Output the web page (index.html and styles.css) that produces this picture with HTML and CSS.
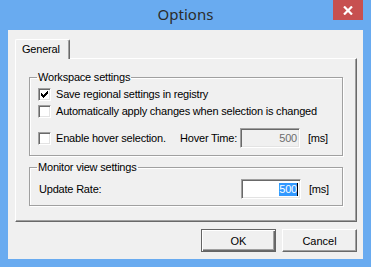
FILE: index.html
```html
<!DOCTYPE html>
<html lang="en">
<head>
  <meta charset="UTF-8">
  <title>Options</title>
  <link rel="stylesheet" href="styles.css">
</head>
<body>

  <div class="window">
    <!-- Barre de titre -->
    <div class="titlebar">
      <span class="title">Options</span>
      <button class="close-button" aria-label="Close">
        <svg width="10" height="9" viewBox="0 0 10 9">
          <path d="M1 0.5 L9 8.5 M9 0.5 L1 8.5" stroke="#ffffff" stroke-width="2.2" fill="none"/>
        </svg>
      </button>
    </div>

    <div class="client">
      <!-- Onglets -->
      <div class="tabs">
        <div class="tab">General</div>
      </div>

      <div class="panel">
        <fieldset class="group">
          <legend>Workspace settings</legend>
          <label class="check-row">
            <span class="check">
              <svg width="7" height="7" viewBox="0 0 7 7" shape-rendering="crispEdges">
                <path d="M0 2h1v3h-1z M1 3h1v3h-1z M2 4h1v3h-1z M3 3h1v3h-1z M4 2h1v3h-1z M5 1h1v3h-1z M6 0h1v3h-1z" fill="#000"/>
              </svg>
            </span>
            Save regional settings in registry
          </label>
          <label class="check-row">
            <span class="check"></span>
            Automatically apply changes when selection is changed
          </label>
          <div class="hover-row">
            <label class="check-row hover-check">
              <span class="check"></span>
              Enable hover selection.
            </label>
            <span class="field-label">Hover Time:</span>
            <span class="field disabled">500</span>
            <span class="unit">[ms]</span>
          </div>
        </fieldset>

        <fieldset class="group second">
          <legend>Monitor view settings</legend>
          <div class="field-row">
            <span class="row-label">Update Rate:</span>
            <span class="field"><span class="selected">500</span><span class="caret"></span></span>
            <span class="unit">[ms]</span>
          </div>
        </fieldset>
      </div>

      <!-- Boutons -->
      <div class="buttons">
        <button class="btn default">OK</button>
        <button class="btn">Cancel</button>
      </div>
    </div>
  </div>

</body>
</html>
```

FILE: styles.css
```css
body {
  margin: 0;
  font-family: 'Liberation Sans', Arial, sans-serif;
  font-size: 11px;
  letter-spacing: -0.2px;
  color: #000;
  background: #69abf0;
}

.window {
  width: 371px;
  height: 267px;
  box-sizing: border-box;
  padding: 0 8px 8px;
  background: #69abf0;
}

.titlebar {
  height: 30px;
  display: grid;
  grid-template-columns: 1fr auto 1fr;
}

.title {
  grid-column: 2;
  font-family: 'Noto Sans', sans-serif;
  font-size: 15px;
  letter-spacing: 0;
  line-height: 29px;
  color: #2b2b2b;
}

.close-button {
  grid-column: 3;
  justify-self: end;
  align-self: start;
  width: 30px;
  height: 20px;
  padding: 0;
  border: none;
  background: #c75050;
  display: flex;
  align-items: center;
  justify-content: center;
}

.client {
  height: 229px;
  box-sizing: border-box;
  background: #f0f0f0;
  padding: 9px 6px 0 7px;
}

.tabs {
  display: flex;
  position: relative;
  z-index: 1;
  margin-bottom: -1px;
}

.tab {
  width: 55px;
  height: 20px;
  box-sizing: border-box;
  padding: 3px 0 0 6px;
  background: #f0f0f0;
  border-top: 1px solid #fff;
  border-left: 1px solid #fff;
  border-right: 1px solid #696969;
  box-shadow: inset -1px 0 #a0a0a0;
  border-radius: 2px 2px 0 0;
}

.panel {
  width: 342px;
  height: 164px;
  box-sizing: border-box;
  padding: 12px 13px 0;
  border: 1px solid;
  border-color: #fff #696969 #696969 #fff;
  box-shadow: inset -1px -1px #a0a0a0;
}

.group {
  margin: 0;
  padding: 4px 8px 7px;
  border: 1px solid #a0a0a0;
  box-shadow: inset 1px 1px #fff, 1px 1px #fff;
}

.group.second {
  margin-top: 5px;
  padding-top: 5px;
  padding-bottom: 6px;
}

legend {
  padding: 0 1px;
  margin-left: -1px;
  line-height: 13px;
}

.check-row {
  display: flex;
  align-items: center;
  height: 13px;
  line-height: 13px;
  margin-bottom: 4px;
  white-space: nowrap;
}

.check {
  width: 13px;
  height: 13px;
  box-sizing: border-box;
  margin-right: 5px;
  flex-shrink: 0;
  background: #fff;
  border: 1px solid;
  border-color: #a0a0a0 #fff #fff #a0a0a0;
  box-shadow: inset 1px 1px #696969, inset -1px -1px #e3e3e3;
  display: flex;
  align-items: center;
  justify-content: center;
}

.hover-row {
  display: flex;
  align-items: center;
  height: 20px;
  margin-top: 10px;
}

.hover-check {
  width: 142px;
  margin-bottom: 0;
}

.field-label {
  width: 60px;
}

.field-row {
  display: flex;
  align-items: center;
  height: 20px;
}

.row-label {
  width: 202px;
  padding-left: 1px;
}

.field {
  width: 60px;
  height: 20px;
  box-sizing: border-box;
  display: flex;
  align-items: center;
  justify-content: flex-end;
  padding-right: 2px;
  background: #fff;
  border: 1px solid;
  border-color: #a0a0a0 #fff #fff #a0a0a0;
  box-shadow: inset 1px 1px #696969, inset -1px -1px #e3e3e3;
}

.field.disabled {
  background: #f0f0f0;
  color: #6d6d6d;
}

.selected {
  background: #3399ff;
  color: #fff;
  line-height: 13px;
}

.caret {
  width: 1px;
  height: 13px;
  background: #000;
}

.unit {
  margin-left: 8px;
}

.buttons {
  display: flex;
  justify-content: flex-end;
  gap: 6px;
  width: 342px;
  margin-top: 7px;
}

.btn {
  width: 75px;
  height: 23px;
  padding: 0;
  font-family: 'Liberation Sans', Arial, sans-serif;
  font-size: 11px;
  color: #000;
  background: #f0f0f0;
  border: 1px solid;
  border-color: #fff #696969 #696969 #fff;
  box-shadow: inset -1px -1px #a0a0a0;
}

.btn.default {
  border-color: #646464;
  box-shadow: inset 1px 1px #fff, inset -1px -1px #696969, inset -2px -2px #a0a0a0;
}
```
